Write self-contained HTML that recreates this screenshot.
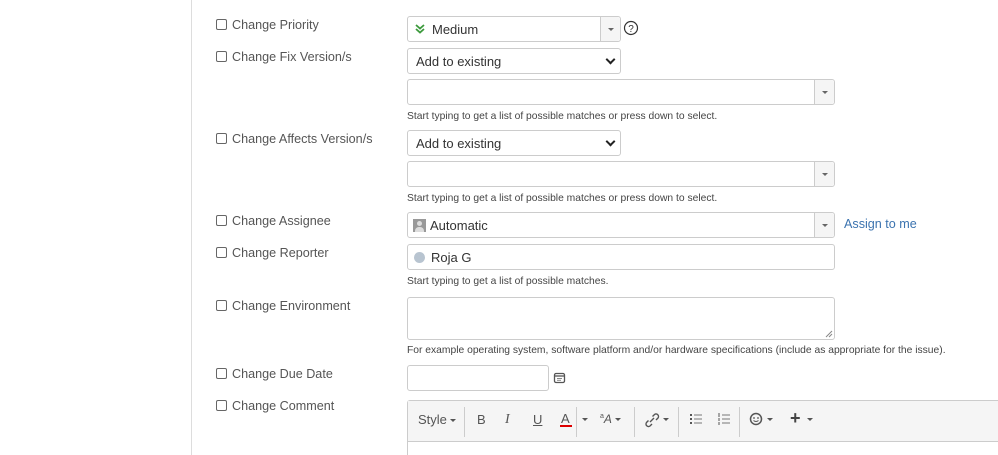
<!DOCTYPE html>
<html style="overflow:hidden;height:455px"><head><meta charset="utf-8"><style>
*{box-sizing:border-box;margin:0;padding:0}
body{width:998px;height:455px;overflow:hidden;background:#fff;font-family:"Liberation Sans",Arial,sans-serif;position:relative;color:#333}
.a{position:absolute}
.vl{left:191px;top:0;width:1px;height:455px;background:#ddd}
.cb{width:11px;height:11px;border:1px solid #666;border-radius:2px;background:#fff}
.lb{font-size:12.6px;color:#555;left:232px}
.box{border:1px solid #ccc;border-radius:3px;background:#fff;font-size:13px;color:#333;padding-left:8px;display:flex;align-items:center}
.help{font-size:10.3px;color:#444;left:407px}
.arr{position:absolute;right:0;top:0;bottom:0;width:20px;border-left:1px solid #ccc;background:#f5f5f5;border-radius:0 3px 3px 0}
.arr:after{content:"";position:absolute;left:7px;top:11px;border:3px solid transparent;border-top:3px solid #666}
.chev{position:absolute;right:6px;top:7px;width:7px;height:7px;border-right:2px solid #222;border-bottom:2px solid #222;transform:rotate(45deg)}
.tb{font-size:13px;color:#555}
.sep{position:absolute;top:6px;width:1px;height:30px;background:#ccc}
.dd{display:inline-block;border:3px solid transparent;border-top:3px solid #555;vertical-align:middle;margin-left:3px;margin-top:3px}
</style></head><body>
<div class="a vl"></div>

<div class="a cb" style="left:216px;top:19px"></div><div class="a lb" style="top:18px">Change Priority</div>
<div class="a cb" style="left:216px;top:51px"></div><div class="a lb" style="top:50px">Change Fix Version/s</div>
<div class="a cb" style="left:216px;top:133px"></div><div class="a lb" style="top:132px">Change Affects Version/s</div>
<div class="a cb" style="left:216px;top:215px"></div><div class="a lb" style="top:214px">Change Assignee</div>
<div class="a cb" style="left:216px;top:247px"></div><div class="a lb" style="top:246px">Change Reporter</div>
<div class="a cb" style="left:216px;top:300px"></div><div class="a lb" style="top:299px">Change Environment</div>
<div class="a cb" style="left:216px;top:368px"></div><div class="a lb" style="top:367px">Change Due Date</div>
<div class="a cb" style="left:216px;top:400px"></div><div class="a lb" style="top:399px">Change Comment</div>

<div class="a box" style="left:407px;top:16px;width:214px;height:26px;padding-left:7px"><svg width="10" height="10" viewBox="0 0 10 10" style="margin-right:7px"><path d="M1 1 L5 4.5 L9 1 M1 5 L5 8.5 L9 5" stroke="#3c9a3c" stroke-width="1.8" fill="none"/></svg>Medium<div class="arr"></div></div>
<svg class="a" style="left:623px;top:20px" width="16" height="16" viewBox="0 0 16 16"><circle cx="8" cy="8" r="6.5" stroke="#333" stroke-width="1.2" fill="none"/><text x="8" y="12" font-size="10" text-anchor="middle" font-family="Liberation Sans" fill="#333">?</text></svg>

<div class="a box" style="left:407px;top:48px;width:214px;height:26px">Add to existing<div class="chev"></div></div>
<div class="a box" style="left:407px;top:79px;width:428px;height:26px"><div class="arr"></div></div>
<div class="a help" style="top:111px">Start typing to get a list of possible matches or press down to select.</div>

<div class="a box" style="left:407px;top:130px;width:214px;height:26px">Add to existing<div class="chev"></div></div>
<div class="a box" style="left:407px;top:161px;width:428px;height:26px"><div class="arr"></div></div>
<div class="a help" style="top:193px">Start typing to get a list of possible matches or press down to select.</div>

<div class="a box" style="left:407px;top:212px;width:428px;height:26px;padding-left:5px"><span style="display:inline-block;width:13px;height:13px;background:#999;margin-right:4px;position:relative"><span style="position:absolute;left:4px;top:2px;width:5px;height:5px;border-radius:50%;background:#ddd"></span><span style="position:absolute;left:2px;top:8px;width:9px;height:5px;border-radius:4px 4px 0 0;background:#ddd"></span></span>Automatic<div class="arr"></div></div>
<div class="a" style="left:844px;top:217px;font-size:12.6px;color:#3b73af">Assign to me</div>

<div class="a box" style="left:407px;top:244px;width:428px;height:26px;padding-left:6px"><span style="display:inline-block;width:11px;height:11px;border-radius:50%;background:#b8c4d0;margin-right:6px"></span>Roja G</div>
<div class="a help" style="top:276px">Start typing to get a list of possible matches.</div>

<div class="a box" style="left:407px;top:297px;width:428px;height:43px"></div>
<svg class="a" style="left:825px;top:330px" width="8" height="8"><path d="M1 7 L7 1 M4 7 L7 4" stroke="#888"/></svg>
<div class="a help" style="top:345px">For example operating system, software platform and/or hardware specifications (include as appropriate for the issue).</div>

<div class="a box" style="left:407px;top:365px;width:142px;height:26px"></div>
<svg class="a" style="left:553px;top:371px" width="13" height="13" viewBox="0 0 13 13"><rect x="1.5" y="2.5" width="10" height="9" rx="1.5" fill="none" stroke="#555" stroke-width="1.3"/><line x1="1.5" y1="5" x2="11.5" y2="5" stroke="#555" stroke-width="1.3"/><line x1="4" y1="7.5" x2="9" y2="7.5" stroke="#888"/><line x1="4" y1="9.3" x2="8" y2="9.3" stroke="#888"/></svg>

<div class="a" style="left:407px;top:400px;width:591px;height:55px;border:1px solid #ccc;border-right:none;border-bottom:none;border-radius:3px 0 0 0;background:#fff"></div>
<div class="a" style="left:408px;top:401px;width:590px;height:41px;background:#f5f5f5;border-bottom:1px solid #ccc">
 <div class="a tb" style="left:10px;top:11px">Style<span class="dd"></span></div>
 <div class="sep" style="left:56px"></div>
 <div class="a tb" style="left:69px;top:11px">B</div>
 <div class="a tb" style="left:97px;top:11px;font-family:'Liberation Serif';font-style:italic;font-size:14px">I</div>
 <div class="a tb" style="left:125px;top:11px;text-decoration:underline">U</div>
 <div class="a tb" style="left:153px;top:10px">A</div>
 <div class="a" style="left:152px;top:24px;width:12px;height:2px;background:#d00"></div>
 <span class="a dd" style="left:171px;top:14px"></span>
 <div class="sep" style="left:168px"></div>
 <div class="a tb" style="left:192px;top:11px;font-size:12px"><sup style="font-size:7px">a</sup><i>A</i><span class="dd"></span></div>
 <div class="sep" style="left:226px"></div>
 <svg class="a" style="left:236px;top:11px" width="16" height="16" viewBox="0 0 16 16"><path d="M6 10 L10 6 M4.5 8.5 L2.5 10.5 a2.5 2.5 0 0 0 3.5 3.5 L8 12 M8.5 4.5 L10.5 2.5 a2.5 2.5 0 0 1 3.5 3.5 L12 8" stroke="#555" stroke-width="1.4" fill="none"/></svg>
 <span class="a dd" style="left:252px;top:14px"></span>
 <div class="sep" style="left:270px"></div>
 <svg class="a" style="left:282px;top:12px" width="12" height="12"><g fill="#555"><rect x="0" y="1" width="2" height="2"/><rect x="0" y="5" width="2" height="2"/><rect x="0" y="9" width="2" height="2"/></g><g stroke="#777"><line x1="4" y1="2" x2="12" y2="2"/><line x1="4" y1="6" x2="12" y2="6"/><line x1="4" y1="10" x2="12" y2="10"/></g></svg>
 <svg class="a" style="left:310px;top:12px" width="12" height="12"><g stroke="#555"><line x1="1" y1="0" x2="1" y2="4"/><line x1="1" y1="5" x2="1" y2="8"/><line x1="1" y1="9" x2="1" y2="12"/></g><g stroke="#777"><line x1="4" y1="2" x2="12" y2="2"/><line x1="4" y1="6" x2="12" y2="6"/><line x1="4" y1="10" x2="12" y2="10"/></g></svg>
 <div class="sep" style="left:331px"></div>
 <svg class="a" style="left:341px;top:11px" width="14" height="14"><circle cx="7" cy="7" r="5.5" stroke="#555" stroke-width="1.5" fill="none"/><circle cx="5" cy="6" r="0.9" fill="#555"/><circle cx="9" cy="6" r="0.9" fill="#555"/><path d="M4.5 8.5 Q7 10.5 9.5 8.5" stroke="#555" fill="none"/></svg>
 <span class="a dd" style="left:356px;top:14px"></span>
 <div class="a" style="left:382px;top:7px;font-size:18px;font-weight:bold;color:#444">+</div>
 <span class="a dd" style="left:396px;top:14px"></span>
</div>
</body></html>
